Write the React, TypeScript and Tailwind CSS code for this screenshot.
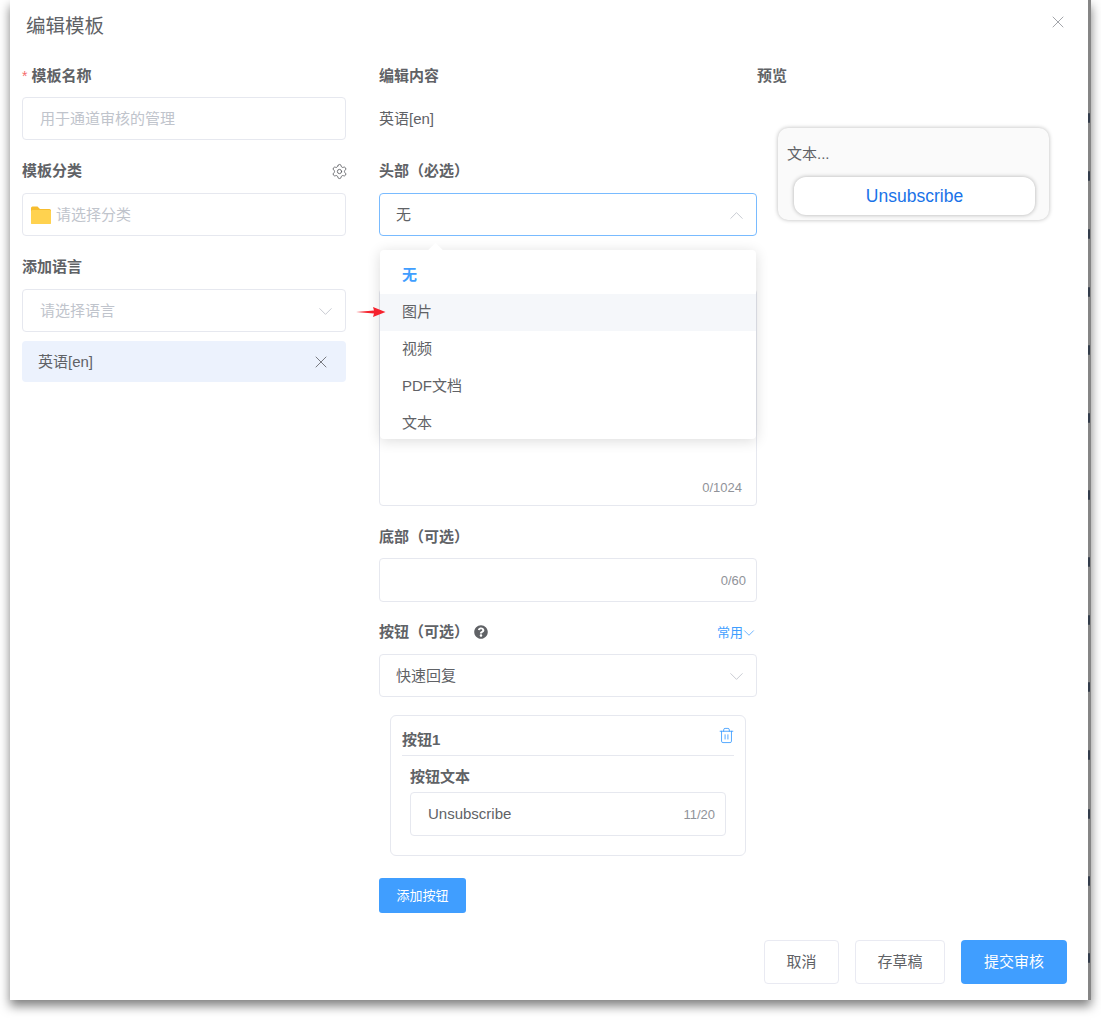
import { ChevronDown, ChevronUp, Settings, Trash2, X } from 'lucide-react';
import { FaQuestionCircle } from 'react-icons/fa';

// y offsets of the bits of page text peeking out behind the dialog's right edge
const edgeMarks = [118, 176, 234, 292, 350, 418, 495, 562, 620, 687, 755, 814, 881, 958];

const headerOptions = ['无', '图片', '视频', 'PDF文档', '文本'];

function FieldLabel({ children, required, raised }: { children: React.ReactNode; required?: boolean; raised?: boolean }) {
  return (
    <div
      className={`h-[22px] mb-[10px] flex items-center text-[15px] leading-[20px] font-bold text-[#606266] ${
        raised ? 'pb-[2px]' : ''
      }`}
    >
      {required && <span className="text-[#f56c6c] font-normal mr-[4px] text-[14px]">*</span>}
      {children}
    </div>
  );
}

function Box({ children, className = '' }: { children?: React.ReactNode; className?: string }) {
  return (
    <div className={`flex items-center rounded-[4px] border border-[#e6e8ef] bg-white pt-px text-[15px] ${className || ''}`}>
      {children}
    </div>
  );
}

function FolderIcon() {
  return (
    <svg width="20" height="18" viewBox="0 0 20 18" className="mr-[5px] shrink-0">
      <path d="M0 2a1.5 1.5 0 0 1 1.5-1.5h5L9 3h9.5A1.5 1.5 0 0 1 20 4.5v12a1.5 1.5 0 0 1-1.5 1.5h-17A1.5 1.5 0 0 1 0 16.5z" fill="#f7bd2e" />
      <path d="M0 5.5A1.5 1.5 0 0 1 1.5 4h17A1.5 1.5 0 0 1 20 5.5v11a1.5 1.5 0 0 1-1.5 1.5h-17A1.5 1.5 0 0 1 0 16.5z" fill="#ffd24f" />
    </svg>
  );
}

function HeaderDropdown() {
  return (
    <div className="absolute left-px top-[89px] w-[376px] z-10">
      <div className="relative h-[189px] overflow-hidden rounded-[4px] bg-white pt-[7px] shadow-[0_2px_14px_rgba(0,0,0,0.14)]">
        {headerOptions.map((option, i) => (
          <div
            key={option}
            className={`h-[37px] flex items-center px-[22px] text-[15px] ${
              i === 0 ? 'font-bold text-[#409eff]' : 'text-[#606266]'
            } ${i === 1 ? 'bg-[#f5f7fa]' : ''}`}
          >
            {option}
          </div>
        ))}
      </div>
      {/* Caret pointing up at the select */}
      <div className="absolute left-[50px] top-[-5px] w-[11px] h-[11px] rotate-45 bg-white" />
      {/* Red pointer next to the second option */}
      <svg width="30" height="10" viewBox="0 0 30 10" className="absolute left-[-24px] top-[57px]">
        <path d="M0 5 L18 3.6 L17 0 L29.5 5 L17 10 L18 6.4 Z" fill="#f5222d" />
      </svg>
    </div>
  );
}

export default function App() {
  return (
    <div className="w-[1101px] h-[1020px] bg-white pl-[10px] overflow-hidden font-['Liberation_Sans','Noto_Sans_CJK_SC',sans-serif]">
      <div className="flex w-[1081px] h-[1000px] shadow-[0_6px_10px_rgba(0,0,0,0.5)]">
        <div className="w-[1078px] h-full flex flex-col bg-white">
          {/* Title bar */}
          <div className="h-[52px] shrink-0 flex items-start justify-between pl-[16px] pr-[20px]">
            <h1 className="mt-[12px] text-[19.5px] leading-[28px] text-[#606266]">编辑模板</h1>
            <X className="mt-[12px] w-[20px] h-[20px] text-[#909399]" strokeWidth={1} />
          </div>

          <div className="flex pl-[12px] pt-[13px]">
            {/* Template settings */}
            <div className="w-[324px] shrink-0">
              <div className="h-[96px]">
                <FieldLabel required>模板名称</FieldLabel>
                <Box className="h-[43px] pl-[17px] text-[#c0c4cc]">用于通道审核的管理</Box>
              </div>
              <div className="h-[96px]">
                <div className="flex items-start justify-between">
                  <FieldLabel raised>模板分类</FieldLabel>
                  <Settings className="mt-[2px] mr-[-2px] w-[17px] h-[17px] text-[#606266]" strokeWidth={1.25} />
                </div>
                <Box className="h-[43px] pl-[8px] text-[#c0c4cc]">
                  <FolderIcon />
                  请选择分类
                </Box>
              </div>
              <div className="h-[96px]">
                <FieldLabel raised>添加语言</FieldLabel>
                <Box className="h-[43px] pl-[17px] pr-[8px] justify-between text-[#c0c4cc]">
                  请选择语言
                  <ChevronDown className="w-[23px] h-[23px] text-[#c0c4cc]" strokeWidth={0.9} />
                </Box>
              </div>
              <div className="-mt-[12px] h-[41px] flex items-center justify-between rounded-[4px] bg-[#ecf2fd] pl-[16px] pr-[15px] pt-px text-[15px] text-[#606266]">
                英语[en]
                <X className="w-[20px] h-[20px] text-[#606266]" strokeWidth={1} />
              </div>
            </div>

            {/* Message content */}
            <div className="w-[378px] shrink-0 ml-[33px]">
              <div className="h-[96px]">
                <FieldLabel>编辑内容</FieldLabel>
                <div className="h-[44px] flex items-center text-[15px] text-[#606266]">英语[en]</div>
              </div>
              <div className="h-[96px] relative">
                <FieldLabel raised>头部（必选）</FieldLabel>
                <Box className="h-[43px] pl-[16px] pr-[8px] justify-between !border-[#79bbff] text-[#606266]">
                  无
                  <ChevronUp className="w-[23px] h-[23px] text-[#c0c4cc]" strokeWidth={0.9} />
                </Box>
                <HeaderDropdown />
              </div>
              <div className="mb-[20px] pt-[32px]">
                <div className="h-[217px] flex items-end justify-end rounded-[4px] border border-[#e6e8ef] bg-white pr-[14px] pb-[9px] text-[13px] leading-[16px] text-[#909399]">
                  0/1024
                </div>
              </div>
              <div className="h-[96px]">
                <FieldLabel>底部（可选）</FieldLabel>
                <Box className="h-[44px] justify-end pr-[10px] !text-[13px] text-[#909399]">0/60</Box>
              </div>
              <div className="flex items-start justify-between">
                <div className="flex items-start">
                  <FieldLabel raised>按钮（可选）</FieldLabel>
                  <FaQuestionCircle className="ml-[5px] mt-[3px] w-[14px] h-[14px] text-[#606266]" />
                </div>
                <div className="flex items-center text-[13px] leading-[22px] text-[#409eff]">
                  常用
                  <ChevronDown className="-ml-[3px] -mr-px w-[18px] h-[18px]" strokeWidth={1} />
                </div>
              </div>
              <Box className="h-[43px] pl-[16px] pr-[8px] justify-between text-[#606266]">
                快速回复
                <ChevronDown className="w-[23px] h-[23px] text-[#c0c4cc]" strokeWidth={0.9} />
              </Box>

              {/* Button editor card */}
              <div className="mt-[18px] ml-[11px] w-[356px] h-[141px] rounded-[6px] border border-[#e6e8ef] px-[11px]">
                <div className="h-[40px] flex items-start justify-between border-b border-[#e6e8ef] text-[15px] leading-[22px] font-bold text-[#606266]">
                  <span className="mt-[13px]">按钮1</span>
                  <Trash2 className="mt-[11px] -mr-[1px] w-[17px] h-[17px] text-[#409eff]" strokeWidth={1.25} />
                </div>
                <div className="mx-[8px] mt-[10px] mb-[4px] text-[15px] leading-[22px] font-bold text-[#606266]">按钮文本</div>
                <Box className="mx-[8px] h-[44px] pl-[17px] pr-[10px] justify-between text-[#606266]">
                  Unsubscribe
                  <span className="text-[13px] text-[#909399]">11/20</span>
                </Box>
              </div>

              <button className="mt-[22px] h-[35px] w-[87px] rounded-[3px] bg-[#409eff] text-[13px] text-white">添加按钮</button>
            </div>

            {/* Live preview */}
            <div className="flex-1">
              <div className="h-[22px] flex items-center text-[15px] font-bold text-[#606266]">预览</div>
              <div className="ml-[21px] mt-[41px] w-[271px] h-[92px] rounded-[10px] bg-[#fafafa] pl-[9px] pt-[16px] shadow-[0_0_4px_rgba(0,0,0,0.28)]">
                <div className="h-[20px] flex items-center text-[15px] text-[#606266]">文本...</div>
                <div className="ml-[7px] mt-[13px] w-[241px] h-[38px] flex items-center justify-center rounded-[12px] bg-white text-[17.5px] text-[#1a73e8] shadow-[0_0_4px_rgba(0,0,0,0.3)]">
                  Unsubscribe
                </div>
              </div>
            </div>
          </div>

          {/* Footer actions */}
          <div className="mt-auto flex justify-end gap-[16px] pr-[21px] pb-[16px] text-[15px]">
            <button className="h-[44px] w-[75px] rounded-[4px] border border-[#e9eaf2] text-[#606266]">取消</button>
            <button className="h-[44px] w-[90px] rounded-[4px] border border-[#e9eaf2] text-[#606266]">存草稿</button>
            <button className="h-[44px] w-[106px] rounded-[4px] bg-[#409eff] text-white">提交审核</button>
          </div>
        </div>

        {/* Sliver of the page behind the dialog */}
        <div className="relative w-[3px] h-full bg-[#858585]">
          {edgeMarks.map(y => (
            <div key={y} className="absolute left-0 w-[2px] h-[10px] rounded-[1px] bg-[#333c4a]" style={{ top: y - 5 }} />
          ))}
        </div>
      </div>
    </div>
  );
}
